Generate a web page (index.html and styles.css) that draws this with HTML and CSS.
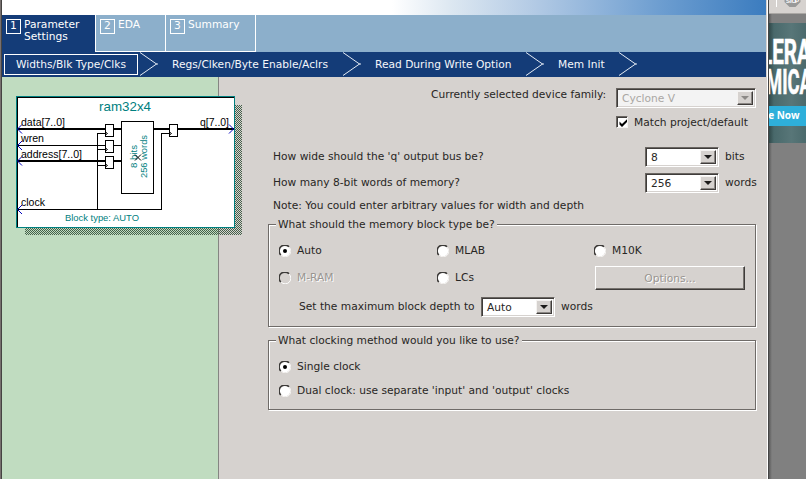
FILE: index.html
```html
<!DOCTYPE html>
<html lang="en">
<head>
<meta charset="utf-8">
<title>MegaWizard Plug-In Manager</title>
<link rel="stylesheet" href="styles.css">
</head>
<body>
<svg class="defs" width="0" height="0">
  <symbol id="chevron" viewBox="0 0 18 24"><path d="M0 .5 16.500 12 0 23.500M16 12h2" fill="none" stroke="#e4ebf4"/></symbol>
  <symbol id="radio" viewBox="0 0 12 12">
    <circle cx="6" cy="6" r="5.2" fill="#fff"/>
    <path d="M1.800 10A5.300 5.300 0 0 1 10 1.800" fill="none" stroke="#3c3a38" stroke-width="1.600"/>
    <path d="M10.200 2.200A5.500 5.500 0 0 1 2.200 10.200" fill="none" stroke="#f6f4f2"/>
  </symbol>
  <symbol id="radio-off" viewBox="0 0 12 12">
    <circle cx="6" cy="6" r="5.2" fill="#d6d2cf"/>
    <path d="M1.800 10A5.300 5.300 0 0 1 10 1.800" fill="none" stroke="#3c3a38" stroke-width="1.600"/>
    <path d="M10.200 2.200A5.500 5.500 0 0 1 2.200 10.200" fill="none" stroke="#fff"/>
  </symbol>
</svg>
<div class="screen">
  <div class="edge"></div>
  <div class="dialog">
    <div class="banner"></div>
    <nav class="tabs">
      <div class="tab active"><span class="num">1</span><span>Parameter<br>Settings</span></div>
      <div class="tab eda"><span class="num">2</span><span>EDA</span></div>
      <div class="tab summary"><span class="num">3</span><span>Summary</span></div>
    </nav>
    <nav class="steps">
      <span class="step current">Widths/Blk Type/Clks</span>
      <svg class="chev"><use href="#chevron"/></svg>
      <span class="step regs">Regs/Clken/Byte Enable/Aclrs</span>
      <svg class="chev"><use href="#chevron"/></svg>
      <span class="step read">Read During Write Option</span>
      <svg class="chev"><use href="#chevron"/></svg>
      <span class="step mem">Mem Init</span>
      <svg class="chev"><use href="#chevron"/></svg>
    </nav>
    <div class="body">
      <aside class="sidebar">
        <svg class="diagram" width="227" height="140" viewBox="16 96 227 140">
          <defs>
            <pattern id="dither" width="2" height="2" patternUnits="userSpaceOnUse"><path d="M0 0h1v1H0zM1 1h1v1H1z" fill="#45604a"/></pattern>
          </defs>
          <rect x="25" y="105" width="217" height="130" fill="url(#dither)" shape-rendering="crispEdges"/>
          <g shape-rendering="crispEdges">
            <rect x="16.5" y="96.5" width="218" height="131" fill="#fff" stroke="#008080"/>
            <path d="M17.5 227V97.5H234" fill="none" stroke="#000"/>
            <g fill="#000">
              <rect x="18" y="128" width="87" height="2"/><rect x="113" y="128" width="9" height="2"/>
              <rect x="18" y="145" width="104" height="1"/>
              <rect x="18" y="160" width="87" height="2"/><rect x="113" y="160" width="9" height="2"/>
              <rect x="153" y="128" width="17" height="2"/><rect x="177" y="128" width="57" height="2"/>
              <rect x="18" y="209" width="144" height="1"/>
            </g>
            <g fill="#fff" stroke="#000">
              <path d="M105.500 133.500H97.500V209M97.500 149.500h8M97.500 165.500h8M169.500 133.500H161.500V209" fill="none"/>
              <rect x="105.500" y="124.500" width="8" height="12"/><rect x="105.500" y="140.500" width="8" height="12"/><rect x="105.500" y="156.500" width="8" height="12"/>
              <rect x="169.500" y="124.500" width="8" height="12"/>
              <rect x="121.500" y="121.500" width="32" height="72"/>
            </g>
          </g>
          <path d="M105.500 132l2 1.500-2 1.500M105.500 148l2 1.500-2 1.500M105.500 164l2 1.500-2 1.500M169.500 132l2 1.500-2 1.500" fill="none" stroke="#000"/>
          <path d="M22 124.500 17.500 129l4.500 4.500M22 141l-4.500 4.500L22 150M22 156.500 17.500 161l4.500 4.500M22 205l-4.500 4.500L22 214M229 124.500l4.500 4.500-4.500 4.500" fill="none" stroke="#0000c0"/>
          <g class="pin">
            <text x="21" y="126" textLength="44" lengthAdjust="spacingAndGlyphs">data[7..0]</text>
            <text x="21" y="142" textLength="23" lengthAdjust="spacingAndGlyphs">wren</text>
            <text x="21" y="158" textLength="61" lengthAdjust="spacingAndGlyphs">address[7..0]</text>
            <text x="21" y="206" textLength="24" lengthAdjust="spacingAndGlyphs">clock</text>
            <text x="200" y="126" textLength="29" lengthAdjust="spacingAndGlyphs">q[7..0]</text>
          </g>
          <g class="teal">
            <text class="name" x="99" y="111" textLength="52" lengthAdjust="spacingAndGlyphs">ram32x4</text>
            <text x="65" y="221" textLength="74" lengthAdjust="spacingAndGlyphs">Block type: AUTO</text>
            <text transform="translate(136.500 168) rotate(-90)" textLength="23" lengthAdjust="spacingAndGlyphs">8 bits</text>
            <text transform="translate(146.500 178) rotate(-90)" textLength="43" lengthAdjust="spacingAndGlyphs">256 words</text>
          </g>
          <path d="M135 154.500l6 6M141 154.500l-6 6" stroke="#000"/>
        </svg>
      </aside>
      <main class="main">
        <div class="family">
          <span class="family-label">Currently selected device family:</span>
          <div class="combo device disabled"><span class="value">Cyclone V</span><span class="drop"><i></i></span></div>
        </div>
        <label class="match"><span class="check"><svg width="8" height="8" viewBox="0 0 8 8"><path d="M.5 2.500v3L3 8l5-5V.2L3 5z"/></svg></span>Match project/default</label>
        <div class="field">
          <span class="question">How wide should the 'q' output bus be?</span>
          <div class="combo size"><span class="value">8</span><span class="drop"><i></i></span></div><span>bits</span>
        </div>
        <div class="field second">
          <span class="question">How many 8-bit words of memory?</span>
          <div class="combo size"><span class="value">256</span><span class="drop"><i></i></span></div><span>words</span>
        </div>
        <p class="note">Note: You could enter arbitrary values for width and depth</p>
        <section class="group block">
          <h2>What should the memory block type be?</h2>
          <div class="choices">
            <label class="radio"><svg><use href="#radio"/><circle cx="6" cy="6" r="2"/></svg>Auto</label>
            <label class="radio"><svg><use href="#radio"/></svg>MLAB</label>
            <label class="radio"><svg><use href="#radio"/></svg>M10K</label>
            <label class="radio off"><svg><use href="#radio-off"/></svg>M-RAM</label>
            <label class="radio"><svg><use href="#radio"/></svg>LCs</label>
            <div class="options">Options...</div>
          </div>
          <div class="depth"><span class="depth-label">Set the maximum block depth to</span>
            <div class="combo auto"><span class="value">Auto</span><span class="drop"><i></i></span></div><span>words</span></div>
        </section>
        <section class="group clocking">
          <h2>What clocking method would you like to use?</h2>
          <label class="radio"><svg><use href="#radio"/><circle cx="6" cy="6" r="2"/></svg>Single clock</label>
          <label class="radio"><svg><use href="#radio"/></svg>Dual clock: use separate 'input' and 'output' clocks</label>
        </section>
      </main>
    </div>
  </div>
  <div class="behind">
    <div class="toolbar"><svg width="37" height="13" viewBox="769 0 37 13"><path d="M776.500 0v7" stroke="#fff"/><path d="M784.500 -8h16v10l-5 5h-6l-5-5z" fill="#999"/><text class="stop" x="786" y="3" textLength="13">STOP</text></svg></div>
    <div class="advert">
      <svg width="37" height="83" viewBox="769 23 37 83">
        <g class="headline">
          <text x="761" y="64" textLength="50" lengthAdjust="spacingAndGlyphs">LERA</text>
          <text x="766" y="94" textLength="46" lengthAdjust="spacingAndGlyphs">MICA</text>
        </g>
      </svg>
      <div class="cta">ce Now</div>
    </div>
  </div>
</div>
</body>
</html>
```
FILE: styles.css
```css
* { box-sizing: border-box; }
body {
  margin: 0;
  font: 10.667px/12px "DejaVu Sans", sans-serif;
  color: #282624;
  background: #808080;
  overflow: hidden;
}
.defs { position: absolute; }
.screen { display: flex; width: 806px; height: 479px; overflow: hidden; }
.edge { width: 2px; flex: none; background: linear-gradient(90deg, #77706f 1px, #454342 1px); }
.dialog {
  width: 767px;
  flex: none;
  display: flex;
  flex-direction: column;
  background: #d6d2cf;
  border-right: 1px solid #444;
  box-shadow: inset -1px 0 #fff;
  white-space: nowrap;
}
.banner, .tabs, .steps { width: 764px; }
.banner { height: 15px; background: linear-gradient(90deg, #fff 390px, #dce7f1 450px, #b4cbe5 530px, #6c9dd0 660px, #3b7cbf 764px); }
.tabs { height: 37px; display: flex; background: #8cafcb; color: #fff; }
.tab { display: flex; gap: 3px; padding: 4px 0 0 4px; border-right: 1px solid #fff; border-bottom: 1px solid #fff; }
.tab.active { width: 94px; background: #143c78; border-bottom: 0; }
.eda { width: 70px; }
.summary { width: 90px; }
.num { width: 15px; height: 15px; border: 1px solid #fff; text-align: center; line-height: 12px; }
.steps { height: 25px; display: flex; background: #143c78; color: #f4f7fb; line-height: 25px; }
.steps > * { flex: none; }
.current { width: 134px; height: 21px; margin: 2px 2px 0; border: 1px solid #fff; text-align: center; line-height: 20px; }
.chev { width: 18px; height: 24px; }
.regs { width: 185px; padding-left: 14px; }
.read { width: 165px; padding-left: 14px; }
.mem { width: 75px; padding-left: 14px; }
.body { flex: 1; display: flex; }
.sidebar {
  position: relative;
  z-index: 1;
  flex: none;
  width: 217px;
  padding: 19px 0 0 14px;
  background: #c0dcc0;
  border-right: 1px solid #858582;
}
.diagram { display: block; overflow: visible; }
.diagram text { font-family: "Liberation Sans", sans-serif; }
.pin { font-size: 11.3px; fill: #000; }
.teal { font-size: 9.5px; fill: #008080; }
.teal .name { font-size: 13px; }
.main { width: 548px; flex: none; padding: 11px 0 0 49px; }
.family { display: flex; height: 20px; }
.family-label { width: 185px; margin: 1px 0 0 163px; }
.combo {
  display: flex;
  flex: none;
  height: 20px;
  border: 1px solid;
  border-color: #6a6662 #fff #fff #6a6662;
  background: #fff;
  box-shadow: inset 1px 1px #3f3c3a, inset -1px -1px #d6d2cf;
  padding: 2px;
}
.value { flex: 1; padding-left: 3px; line-height: 16px; }
.device .value { line-height: 15px; }
.drop {
  width: 16px;
  display: flex;
  align-items: center;
  justify-content: center;
  background: #d6d2cf;
  border: 1px solid;
  border-color: #f5f3f1 #3f3c3a #3f3c3a #f5f3f1;
  box-shadow: inset -1px -1px #8b8784;
}
.drop i { border: 4px solid transparent; border-top-color: #1c1b1a; border-bottom: 0; }
.device { width: 140px; }
.disabled { background: #f3f3f3; color: #aaa7a4; }
.disabled .drop i { border-top-color: #8c8986; }
.match { display: flex; gap: 6px; margin: 8px 0 0 348px; line-height: 13px; }
.check {
  width: 12px;
  height: 12px;
  padding: 1px;
  background: #fff;
  border: 1px solid;
  border-color: #6a6662 #f5f3f1 #f5f3f1 #6a6662;
  box-shadow: inset 1px 1px #3f3c3a;
}
.check svg { display: block; margin: 1px; }
.field { display: flex; height: 20px; margin: 18px 0 0 5px; line-height: 19px; }
.field.second { margin-top: 6px; }
.question { width: 372px; flex: none; }
.size { width: 74px; margin-right: 6px; }
.note { margin: 7px 0 0 5px; }
.group { width: 488px; border: 1px solid #6f6b68; box-shadow: inset 1px 1px #fff, 1px 1px #fff; }
.group h2 { width: fit-content; margin: -6px 0 0 7px; padding: 0 2px; font: inherit; background: #d6d2cf; }
.block { height: 103px; margin-top: 12px; }
.clocking { height: 70px; margin-top: 13px; }
.radio { display: flex; align-items: center; gap: 6px; height: 12px; }
.radio svg { width: 12px; height: 12px; }
.off { color: #999591; text-shadow: 1px 1px #fff; }
.choices { display: grid; grid-template-columns: 158px 157px 1fr; grid-template-rows: 20px 24px; row-gap: 5px; padding: 10px 0 0 10px; align-items: center; }
.options {
  width: 150px;
  height: 24px;
  margin-left: 1px;
  line-height: 23px;
  text-align: center;
  color: #999591;
  text-shadow: 1px 1px #fff;
  border: 1px solid;
  border-color: #fff #3f3c3a #3f3c3a #fff;
  box-shadow: inset -1px -1px #77736f;
}
.depth { display: flex; margin: 7px 0 0 30px; line-height: 19px; }
.depth-label { width: 182px; }
.auto { width: 74px; margin-right: 6px; }
.clocking .radio { margin: 14px 0 0 10px; }
.clocking .radio + .radio { margin-top: 12px; }
.behind { flex: 1; min-width: 0; background: linear-gradient(90deg, #5b5b5b, #808080 3px); }
.toolbar { height: 14px; background: #d6d2cf; border-bottom: 1px solid #aaa7a4; margin-bottom: 9px; }
.toolbar svg, .advert svg { display: block; }
.stop { font: bold 6px "Liberation Sans", sans-serif; fill: #fff; }
.advert { height: 120px; background: linear-gradient(90deg, #30494a, #49696b 5px, #587678 60%, #4b6a6c); overflow: hidden; }
.headline { font: bold 35px Roboto, "Liberation Sans", sans-serif; fill: #fff; stroke: #fff; stroke-width: .6px; }
.cta { height: 20px; background: #2eafda; color: #fff; font: bold 10px/19px "Open Sans", sans-serif; text-indent: -6px; white-space: nowrap; }
```
